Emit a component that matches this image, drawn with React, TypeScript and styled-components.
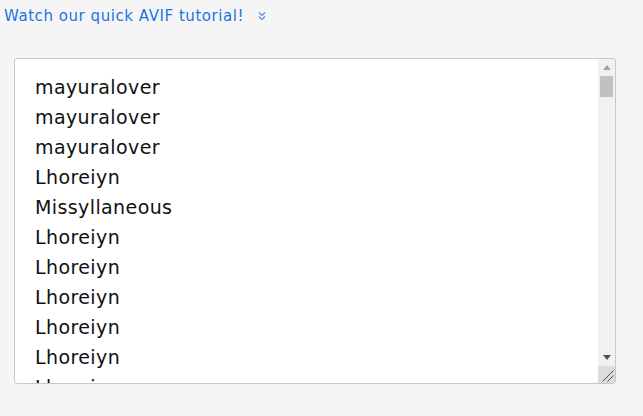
import styled, { createGlobalStyle } from 'styled-components';

const GlobalStyle = createGlobalStyle`
  html, body {
    margin: 0;
    padding: 0;
    background: #f5f5f5;
    font-family: "DejaVu Sans", Verdana, sans-serif;
  }
`;

const Page = styled.div`
  padding: 6px 14px 0 4px;
  width: 643px;
  box-sizing: border-box;
`;

const TutorialLink = styled.a`
  display: inline-flex;
  align-items: center;
  gap: 13px;
  color: #1a73e8;
  font-size: 15px;
  letter-spacing: 0.55px;
  text-decoration: none;
  cursor: pointer;

  svg {
    width: 10px;
    height: 10px;
    color: #4a8fe8;
  }
`;

const Frame = styled.div`
  display: flex;
  box-sizing: border-box;
  width: 602px;
  height: 326px;
  margin: 33px 0 0 10px;
  border: 1px solid #c8c8c8;
  border-radius: 3px;
  background: #fff;
  overflow: hidden;
`;

const Names = styled.textarea`
  flex: 1;
  min-width: 0;
  margin: 0;
  padding: 13px 20px;
  border: 0;
  background: transparent;
  color: #111;
  font-family: "DejaVu Sans", Verdana, sans-serif;
  font-size: 19px;
  letter-spacing: 0.4px;
  line-height: 30px;
  outline: none;
  resize: none;
  overflow: hidden;
`;

const ScrollBar = styled.div`
  display: flex;
  flex-direction: column;
  width: 17px;
  flex-shrink: 0;
  background: #f1f1f1;
`;

const ArrowButton = styled.div<{ $active?: boolean }>`
  display: flex;
  align-items: center;
  justify-content: center;
  height: 17px;
  color: ${p => (p.$active ? '#505050' : '#a3a3a3')};

  svg {
    width: 8px;
    height: 5px;
  }
`;

const Track = styled.div`
  flex: 1;
  padding: 0 2px;
`;

const Thumb = styled.div<{ $size: number }>`
  height: ${p => p.$size}px;
  background: #c1c1c1;
`;

const Corner = styled.div`
  height: 17px;
  background: #dcdcdc;

  svg {
    display: block;
  }
`;

const head = [
  'mayuralover',
  'mayuralover',
  'mayuralover',
  'Lhoreiyn',
  'Missyllaneous',
];

const names = [
  ...head,
  ...Array.from({ length: 143 }, (_, i) => (i % 17 === 16 ? 'Missyllaneous' : 'Lhoreiyn')),
];

const App = () => {
  return (
    <Page>
      <GlobalStyle />
      <TutorialLink>
        Watch our quick AVIF tutorial!
        <svg viewBox="0 0 10 10" fill="none" stroke="currentColor" strokeWidth="1.2">
          <path d="M2 1.5 L5 4.5 L8 1.5" />
          <path d="M2 5.5 L5 8.5 L8 5.5" />
        </svg>
      </TutorialLink>
      <Frame>
        <Names readOnly value={names.join('\n')} />
        <ScrollBar>
          <ArrowButton>
            <svg viewBox="0 0 8 5">
              <path d="M0 5 L4 0 L8 5 Z" fill="currentColor" />
            </svg>
          </ArrowButton>
          <Track>
            <Thumb $size={21} />
          </Track>
          <ArrowButton $active>
            <svg viewBox="0 0 8 5">
              <path d="M0 0 L8 0 L4 5 Z" fill="currentColor" />
            </svg>
          </ArrowButton>
          <Corner>
            <svg width="17" height="17" viewBox="0 0 17 17">
              <path d="M4.5 15.5 L15.5 4.5 M9.5 15.5 L15.5 9.5" stroke="#555" strokeWidth="1" />
            </svg>
          </Corner>
        </ScrollBar>
      </Frame>
    </Page>
  );
};

export default App;
